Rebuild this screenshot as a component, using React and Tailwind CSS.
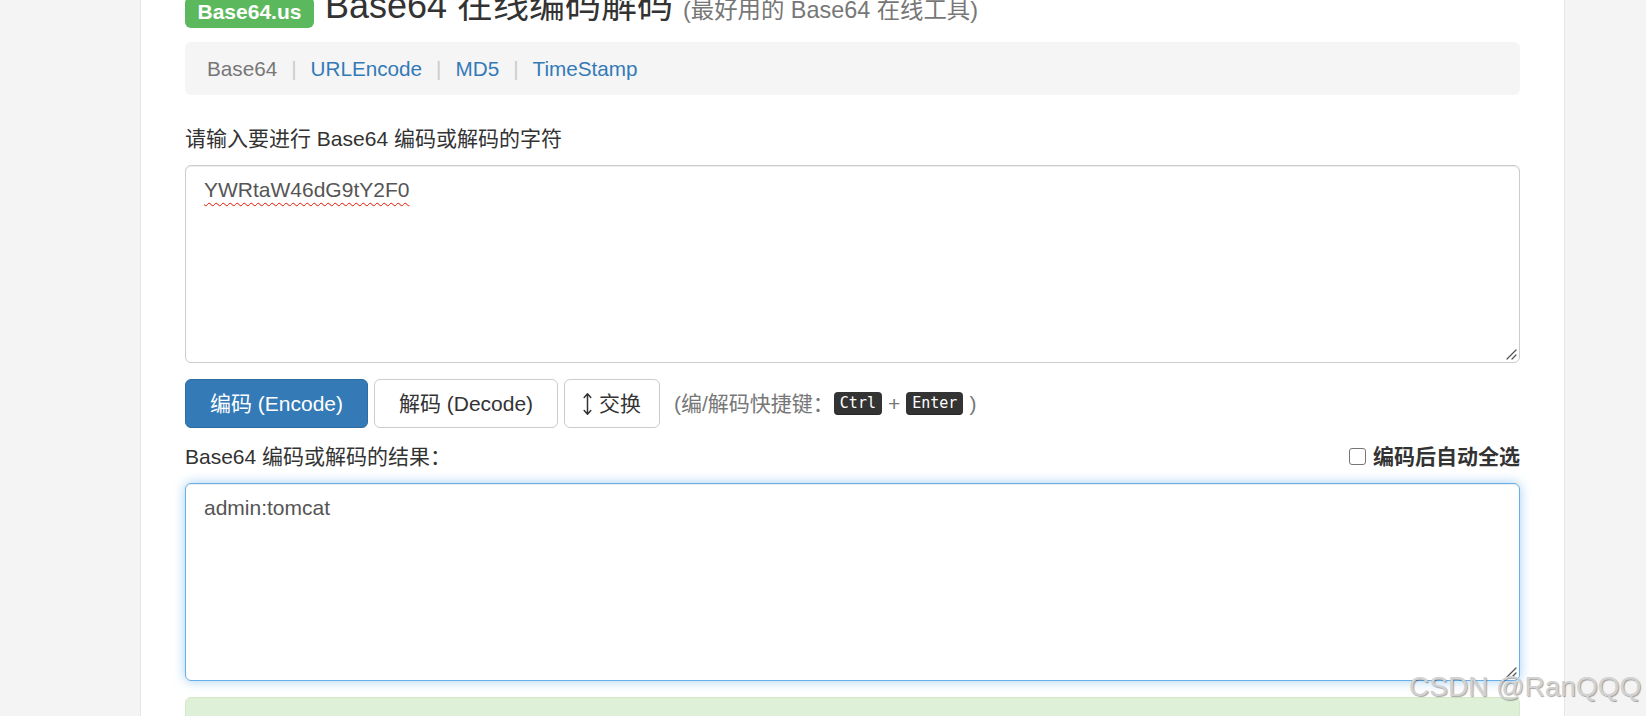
export default function App() {
  const Grip = () => (
    <svg className="absolute right-[2px] bottom-[2px]" width="12" height="12" viewBox="0 0 12 12">
      <path d="M11 2 L2 11 M11 7 L7 11" stroke="#555" strokeWidth="1.3" strokeLinecap="round" fill="none" />
    </svg>
  );
  return (
    <div className="relative w-[1646px] h-[716px] overflow-hidden bg-[#f4f4f4] font-['Liberation_Sans','Noto_Sans_CJK_SC',sans-serif] text-[21px] leading-[30px] text-[#333]">
      <div className="ml-[140px] w-[1425px] h-[716px] bg-white border-x border-[#e6e6e6] px-[44px] flex flex-col">
        <h1 className="shrink-0 -mt-[8.6px] flex items-end h-[39.6px] leading-[39.6px] text-[36px] font-normal whitespace-nowrap">
          <span className="mb-[3px] bg-[#5cb85c] text-white font-bold text-[21px] leading-[21px] pt-[4px] pb-[6.5px] px-[12.5px] rounded-[6px]">
            Base64.us
          </span>
          <span className="ml-[11px]">
            Base64 在线编码解码 <small className="text-[23.4px] text-[#777]">(最好用的 Base64 在线工具)</small>
          </span>
        </h1>

        <div className="shrink-0 mt-[11px] h-[53.3px] bg-[#f5f5f5] rounded-[6px] flex items-center px-[22px] gap-[14px] text-[20.7px]">
          <span className="text-[#777]">Base64</span>
          <span className="text-[#ccc]">|</span>
          <span className="text-[#337ab7]">URLEncode</span>
          <span className="text-[#ccc]">|</span>
          <span className="text-[#337ab7]">MD5</span>
          <span className="text-[#ccc]">|</span>
          <span className="text-[#337ab7]">TimeStamp</span>
        </div>

        <div className="shrink-0 mt-[28.3px] mb-[11.2px] h-[30px]">请输入要进行 Base64 编码或解码的字符</div>

        <div className="shrink-0 relative h-[198.4px] border border-[#ccc] rounded-[6px] px-[18px] py-[9px] text-[#555] shadow-[inset_0_1px_1px_rgba(0,0,0,0.075)]">
          <span className="underline decoration-wavy decoration-[#e51400] decoration-[1px] underline-offset-[5px]">YWRtaW46dG9tY2F0</span>
          <Grip />
        </div>

        <div className="shrink-0 mt-[15.8px] h-[49.3px] flex items-center whitespace-nowrap">
          <div className="w-[183px] h-[49.3px] bg-[#337ab7] border border-[#2e6da4] text-white rounded-[6px] flex items-center justify-center">
            编码 (Encode)
          </div>
          <div className="ml-[6px] w-[184px] h-[49.3px] bg-white border border-[#ccc] rounded-[6px] flex items-center justify-center">
            解码 (Decode)
          </div>
          <div className="ml-[6px] w-[96px] h-[49.3px] bg-white border border-[#ccc] rounded-[6px] flex items-center justify-center">
            <svg width="9" height="24" viewBox="0 0 9 24" className="mr-[7px]">
              <path d="M4.5 2 L4.5 22 M1.2 5.5 L4.5 1.8 L7.8 5.5 M1.2 18.5 L4.5 22.2 L7.8 18.5" stroke="#333" strokeWidth="1.5" fill="none" strokeLinecap="round" strokeLinejoin="round" />
            </svg>
            交换
          </div>
          <div className="ml-[14px] flex items-center text-[#777]">
            <span>(编/解码快捷键：</span>
            <span className="h-[23px] leading-[23px] px-[6px] rounded-[4px] bg-[#333] text-white text-[15px] font-['DejaVu_Sans_Mono',monospace] shadow-[inset_0_-1px_0_rgba(0,0,0,0.25)]">Ctrl</span>
            <span className="mx-[6px]">+</span>
            <span className="h-[23px] leading-[23px] px-[6px] rounded-[4px] bg-[#333] text-white text-[15px] font-['DejaVu_Sans_Mono',monospace] shadow-[inset_0_-1px_0_rgba(0,0,0,0.25)]">Enter</span>
            <span className="ml-[6px]">)</span>
          </div>
        </div>

        <div className="shrink-0 mt-[13.5px] mb-[11.2px] h-[30px] flex items-center justify-between">
          <span>Base64 编码或解码的结果：</span>
          <span className="flex items-center font-bold">
            <span className="w-[17px] h-[17px] border border-[#767676] rounded-[3px] bg-white mr-[7px]" />
            编码后自动全选
          </span>
        </div>

        <div className="shrink-0 relative h-[198.3px] border border-[#66afe9] rounded-[6px] px-[18px] py-[9px] text-[#555] shadow-[inset_0_1px_1px_rgba(0,0,0,0.075),0_0_12px_rgba(102,175,233,0.6)]">
          admin:tomcat
          <Grip />
        </div>

        <div className="shrink-0 mt-[15.7px] h-[60px] bg-[#dff0d8] border border-[#d6e9c6] rounded-[6px]" />
      </div>

      <div className="absolute left-[1409px] top-[673px] text-[28px] leading-[28px] text-[#d2d2d2] font-['Liberation_Sans',sans-serif] whitespace-nowrap [text-shadow:1px_1px_1px_rgba(0,0,0,0.35)]">
        CSDN @RanQQQ
      </div>
    </div>
  );
}
